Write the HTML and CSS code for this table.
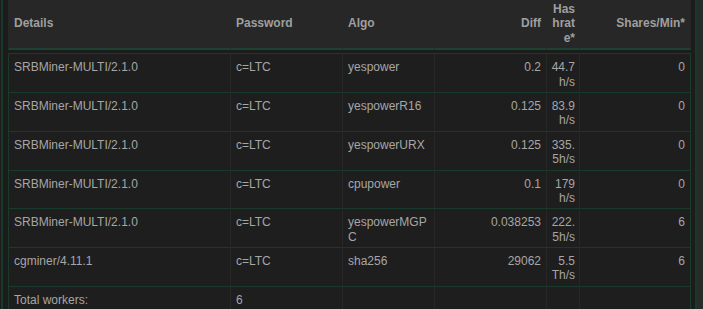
FILE: index.html
```html
<!DOCTYPE html>
<html lang="en">
<head>
    <meta charset="UTF-8">
    <meta name="viewport" content="width=device-width, initial-scale=1.0">
    <title>Workers</title>
    <link rel="stylesheet" href="styles.css">
</head>
<body>

<div class="panel">
    <table class="workers">
        <colgroup>
            <col class="col-details">
            <col class="col-password">
            <col class="col-algo">
            <col class="col-diff">
            <col class="col-hashrate">
            <col class="col-shares">
        </colgroup>
        <thead>
            <tr>
                <th>Details</th>
                <th>Password</th>
                <th>Algo</th>
                <th class="num">Diff</th>
                <th class="num rate">Hashrate*</th>
                <th class="num">Shares/Min*</th>
            </tr>
        </thead>
        <tbody>
            <tr>
                <td>SRBMiner-MULTI/2.1.0</td>
                <td>c=LTC</td>
                <td>yespower</td>
                <td class="num">0.2</td>
                <td class="num rate">44.7 h/s</td>
                <td class="num">0</td>
            </tr>
            <tr>
                <td>SRBMiner-MULTI/2.1.0</td>
                <td>c=LTC</td>
                <td>yespowerR16</td>
                <td class="num">0.125</td>
                <td class="num rate">83.9 h/s</td>
                <td class="num">0</td>
            </tr>
            <tr>
                <td>SRBMiner-MULTI/2.1.0</td>
                <td>c=LTC</td>
                <td>yespowerURX</td>
                <td class="num">0.125</td>
                <td class="num rate">335.5h/s</td>
                <td class="num">0</td>
            </tr>
            <tr>
                <td>SRBMiner-MULTI/2.1.0</td>
                <td>c=LTC</td>
                <td>cpupower</td>
                <td class="num">0.1</td>
                <td class="num rate">179 h/s</td>
                <td class="num">0</td>
            </tr>
            <tr>
                <td>SRBMiner-MULTI/2.1.0</td>
                <td>c=LTC</td>
                <td>yespowerMGPC</td>
                <td class="num">0.038253</td>
                <td class="num rate">222.5h/s</td>
                <td class="num">6</td>
            </tr>
            <tr>
                <td>cgminer/4.11.1</td>
                <td>c=LTC</td>
                <td>sha256</td>
                <td class="num">29062</td>
                <td class="num rate">5.5 Th/s</td>
                <td class="num">6</td>
            </tr>
            <tr>
                <td>Total workers:</td>
                <td>6</td>
                <td></td>
                <td></td>
                <td class="rate"></td>
                <td></td>
            </tr>
        </tbody>
    </table>
</div>
<div class="rail"></div>

</body>
</html>
```

FILE: styles.css
```css
html, body {
    margin: 0;
    height: 100%;
}
body {
    display: flex;
    align-items: flex-start;
    background: #1b1b1b;
    font-family: "Liberation Sans", Arial, sans-serif;
    font-size: 12px;
    line-height: 1.2;
    color: #a6a6a6;
}
.panel {
    margin-left: 1px;
    padding: 0 4px 0 5px;
    width: 683px;
    border-left: 2px solid #173a2a;
    border-right: 2px solid #173a2a;
    background: #1c1c1c;
    min-height: 100%;
}
.rail {
    flex: 1;
    align-self: stretch;
    background: #2a2a2a;
}
.workers {
    width: 683px;
    table-layout: fixed;
    border-collapse: separate;
    border-spacing: 0;
}
.col-details { width: 222px; }
.col-password { width: 112px; }
.col-algo { width: 92px; }
.col-diff { width: 112px; }
.col-hashrate { width: 33px; }
.col-shares { width: 112px; }

.workers th,
.workers td {
    text-align: left;
    word-break: break-all;
    padding-left: 5px;
    padding-right: 5px;
}
.workers th {
    background: #272727;
    color: #9f9f9f;
    font-weight: bold;
    vertical-align: middle;
    padding-top: 2px;
    padding-bottom: 3px;
    border-left: 1px solid transparent;
    border-bottom: 2px solid #1c4231;
}
.workers th:last-child {
    border-right: 1px solid transparent;
}
.workers tbody::before {
    content: "";
    display: table-row;
    height: 3px;
}
.workers td {
    background: #1e1e1e;
    vertical-align: top;
    padding-top: 6px;
    padding-bottom: 3px;
    border-left: 1px solid #272727;
    border-bottom: 1px solid #1a3a2b;
}
.workers tbody tr:first-child td {
    border-top: 1px solid #1a3a2b;
}
.workers td:first-child {
    border-left-color: #1a3a2b;
}
.workers td:last-child {
    border-right: 1px solid #1a3a2b;
}
.workers .num {
    text-align: right;
}
.workers .rate {
    padding-left: 4px;
    padding-right: 4px;
}
```
